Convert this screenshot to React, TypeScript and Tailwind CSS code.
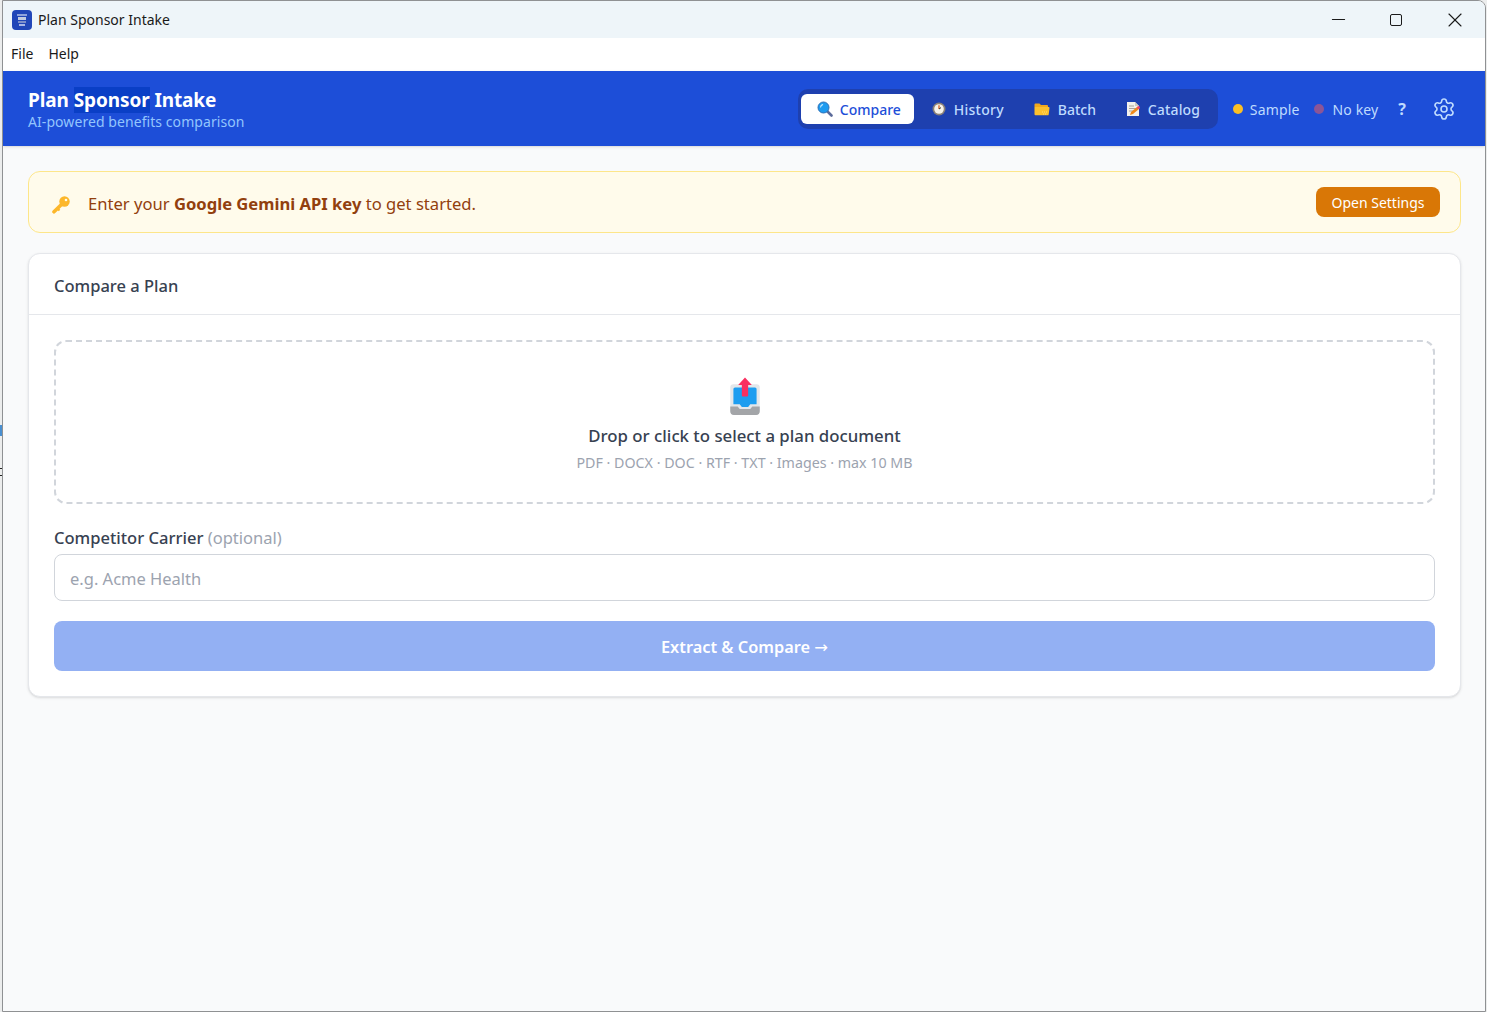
import React from 'react';
import { Minus, X, Settings } from 'lucide-react';

const font = "font-['Noto_Sans','Open_Sans',sans-serif]";

const SearchIcon = () => (
  <svg width="16" height="16" viewBox="0 0 16 16">
    <path d="M9.500 9.500 14.500 14.500" stroke="#5b6b9a" strokeWidth="2.600" strokeLinecap="round" />
    <circle cx="6.500" cy="6.500" r="5.500" fill="#1d9bf0" stroke="#2f6fb5" strokeWidth="1" />
    <path d="M3.600 6a3 3 0 0 1 2-2.400" stroke="#bfe6ff" strokeWidth="1.200" fill="none" strokeLinecap="round" />
  </svg>
);

const ClockIcon = () => (
  <svg width="14" height="14" viewBox="0 0 14 14">
    <circle cx="7" cy="7" r="6.500" fill="#8a8078" />
    <circle cx="7" cy="7" r="4.800" fill="#f7f3ea" />
    <path d="M7 7V3.200" stroke="#d9601a" strokeWidth="1.300" />
    <path d="M7 7 9 5.600" stroke="#33302c" strokeWidth="1" />
  </svg>
);

const FolderIcon = () => (
  <svg width="16" height="14" viewBox="0 0 16 14">
    <path d="M0.500 2.500a1 1 0 0 1 1-1h4l1.500 1.500h6a1 1 0 0 1 1 1V5H0.500z" fill="#f2a81d" />
    <path d="M0.500 5h14.200a.8.8 0 0 1 .8.900l-.8 6.500a1 1 0 0 1-1 .9H1.500a1 1 0 0 1-1-1z" fill="#fcc02e" />
    <path d="M8 10h.8M10 10h.8M12 10h.8M9 12h.8M11 12h.8" stroke="#fde9a8" strokeWidth="0.800" />
  </svg>
);

const MemoIcon = () => (
  <svg width="14" height="16" viewBox="0 0 14 16">
    <path d="M1 1h8l4 4v10H1z" fill="#f4f1ec" />
    <path d="M9 1l4 4H9z" fill="#cfc9c0" />
    <path d="M3 5h5M3 7.500h7M3 10h4" stroke="#a8a29a" strokeWidth="1" />
    <path d="M4 14l1-3 6-5 2 2-6 5z" fill="#ef8a1c" />
    <circle cx="12.500" cy="6.500" r="1.500" fill="#f0436a" />
  </svg>
);

const KeyIcon = () => (
  <svg width="18" height="18" viewBox="0 0 18 18">
    <path d="M10 8 2 15.800" stroke="#fcb72b" strokeWidth="3.600" strokeLinecap="round" />
    <path d="M5.500 12.500 7.500 14.500" stroke="#fcb72b" strokeWidth="2.200" />
    <circle cx="12.500" cy="5.500" r="5.200" fill="#fcb72b" />
    <circle cx="14" cy="4" r="1.300" fill="#fffbeb" />
  </svg>
);

const InboxIcon = () => (
  <svg width="34" height="40" viewBox="0 0 32 38">
    <path d="M2 10a3 3 0 0 1 3-3h22a3 3 0 0 1 3 3v22a4 4 0 0 1-4 4H6a4 4 0 0 1-4-4z" fill="#e3e7ea" />
    <path d="M2 28h7l2 2.500h10l2-2.500h7v4.500a3.500 3.500 0 0 1-3.500 3.500h-21A3.500 3.500 0 0 1 2 32.500z" fill="#a3a5a8" />
    <path d="M5 11.500a1.500 1.500 0 0 1 1.500-1.500h19a1.500 1.500 0 0 1 1.500 1.500V26h-6l-2 2.500h-6L11 26H5z" fill="#1c9df0" />
    <path d="M16 0.500 22.500 7.500h-3.500V17.500a1 1 0 0 1-1 1h-4a1 1 0 0 1-1-1V7.500H9.500z" fill="#f92f60" />
  </svg>
);

const AppIcon = () => (
  <div className="w-5 h-5 rounded-[4px] bg-[#2146b8] flex flex-col items-center justify-center gap-[1px]">
    <div className="w-[10px] h-[2px] bg-[#8fa3dc]" />
    <div className="w-[8px] h-[3px] bg-[#c2cbe0]" />
    <div className="w-[8px] h-[2px] bg-[#7d8fc9]" />
    <div className="w-[6px] h-[2px] bg-[#a9b7e6]" />
  </div>
);

const NavTab = ({ icon, label, active, box }: { icon: React.ReactNode; label: string; active?: boolean; box: string }) => (
  <div className={`${box} h-[30px] flex items-center gap-2 rounded-md text-sm font-medium ${active ? 'bg-white text-[#1d4ed8]' : 'text-[#bfdbfe]'}`}>
    {icon}
    <span className="pt-[2px]">{label}</span>
  </div>
);

export default function App() {
  return (
    <div className={`${font} relative w-full h-[1012px] bg-[#eceded] overflow-hidden flex pl-[2px] pr-[1px]`}>
      {/* bits of the desktop behind the window */}
      <div className="absolute left-0 top-[425px] w-[2px] h-[11px] bg-[#4a8fd0]" />
      <div className="absolute left-0 top-[468px] w-[2px] h-[1px] bg-[#222222]" />
      <div className="absolute left-0 top-[475px] w-[2px] h-[1px] bg-[#222222]" />
      <div className="flex-1 border border-[#8f9193] rounded-tr-lg flex flex-col overflow-hidden bg-[#f9fafb]">
        {/* title bar */}
        <div className="h-[37px] shrink-0 bg-[#eef5f9] flex items-center pl-[9px] text-[#1a1a1a]">
          <AppIcon />
          <span className="ml-[6px] text-sm">Plan Sponsor Intake</span>
          <div className="ml-auto flex items-center">
            <div className="w-[58px] flex justify-center -mt-[1px]"><Minus size={21} strokeWidth={1.200} /></div>
            <div className="w-[58px] flex justify-center"><div className="w-[12px] h-[12px] border-[1.5px] border-[#1a1a1a] rounded-[2px]" /></div>
            <div className="w-[60px] flex justify-center"><X size={24} strokeWidth={1.100} /></div>
          </div>
        </div>
        {/* menu */}
        <div className="h-[33px] shrink-0 bg-white flex items-center pl-[8px] pb-[2px] gap-[15px] text-sm text-[#1a1a1a]">
          <span>File</span>
          <span>Help</span>
        </div>
        {/* app header */}
        <header className="h-[75px] shrink-0 bg-[#1d4ed8] flex items-center justify-between pl-[25px] pr-[29px] shadow-sm">
          <div className="flex flex-col">
            <div className="text-[19px] leading-[26px] font-bold text-white tracking-[-0.1px]">
              Plan <span className="bg-[#0a3fc6]">Sponsor</span> Intake
            </div>
            <div className="text-sm leading-[18px] text-[#93c5fd] tracking-[0.07px]">AI-powered benefits comparison</div>
          </div>
          <div className="flex items-center">
            <div className="w-[420px] h-[40px] bg-[#1e40af] rounded-[10px] flex items-center pl-[3px] mr-[15px]">
              <NavTab active icon={<SearchIcon />} label="Compare" box="w-[113px] pl-4 gap-[7px]" />
              <NavTab icon={<ClockIcon />} label="History" box="w-[104px] pl-[18px] tracking-[0.25px]" />
              <NavTab icon={<FolderIcon />} label="Batch" box="w-[88px] pl-4" />
              <NavTab icon={<MemoIcon />} label="Catalog" box="w-[109px] pl-5 tracking-[0.15px]" />
            </div>
            <div className="flex items-center gap-[7px] text-sm text-[#bfdbfe] tracking-[0.15px]">
              <span className="w-[10px] h-[10px] rounded-full bg-[#fbbf24]" />
              <span className="pt-[2px]">Sample</span>
            </div>
            <div className="flex items-center gap-2 text-sm text-[#bfdbfe] ml-[15px] tracking-[0.15px]">
              <span className="w-[10px] h-[10px] rounded-full bg-[#8c5596]" />
              <span className="pt-[2px]">No key</span>
            </div>
            <span className="ml-5 text-base font-bold text-[#bfdbfe]">?</span>
            <Settings size={24} strokeWidth={1.600} className="ml-[26px] text-[#bfdbfe]" />
          </div>
        </header>
        {/* content */}
        <main className="flex-1 pl-[25px] pr-[24px] pt-[25px] flex flex-col gap-5">
          <div className="h-[62px] bg-[#fffbeb] border border-[#fde68a] rounded-xl flex items-center pl-[23px] pr-[20px] text-[#92400e]">
            <span className="mt-[5px]"><KeyIcon /></span>
            <span className="ml-[18px] pt-[4px] text-[16.6px]">Enter your <b className="font-bold">Google Gemini API key</b> to get started.</span>
            <button className="ml-auto w-[124px] h-[30px] pt-[1px] bg-[#d97706] text-white text-sm rounded-lg">Open Settings</button>
          </div>
          <section className="h-[444px] bg-white border border-[#e5e7eb] rounded-xl shadow-sm flex flex-col">
            <div className="h-[61px] shrink-0 border-b border-[#e5e7eb] flex items-center pl-[25px] pt-[4px] text-[16.5px] font-medium text-[#374151]">
              Compare a Plan
            </div>
            <div className="px-[25px] pt-[25px] flex flex-col">
              <div className="h-[164px] border-2 border-dashed border-[#d1d5db] rounded-xl flex flex-col items-center pt-[35px]">
                <InboxIcon />
                <div className="mt-[7px] text-[16.8px] leading-[24px] font-medium text-[#374151]">Drop or click to select a plan document</div>
                <div className="mt-[5px] text-[14.25px] leading-[20px] text-[#9ca3af]">PDF · DOCX · DOC · RTF · TXT · Images · max 10 MB</div>
              </div>
              <label className="mt-[22px] h-[24px] text-[16.55px] leading-[24px] font-medium text-[#374151]">
                Competitor Carrier <span className="font-normal text-[#9ca3af]">(optional)</span>
              </label>
              <input
                readOnly
                placeholder="e.g. Acme Health"
                className="mt-[4px] h-[47px] border border-[#d1d5db] rounded-lg px-[15px] pt-[2px] text-[16.5px] bg-white placeholder:text-[#9ca3af] outline-none"
              />
              <button className="mt-[20px] h-[50px] pt-[3px] rounded-lg bg-[#93b0f3] text-white text-[16.35px] font-semibold">
                Extract &amp; Compare <span className="font-['DejaVu_Sans',sans-serif] font-normal">→</span>
              </button>
            </div>
          </section>
        </main>
      </div>
    </div>
  );
}
